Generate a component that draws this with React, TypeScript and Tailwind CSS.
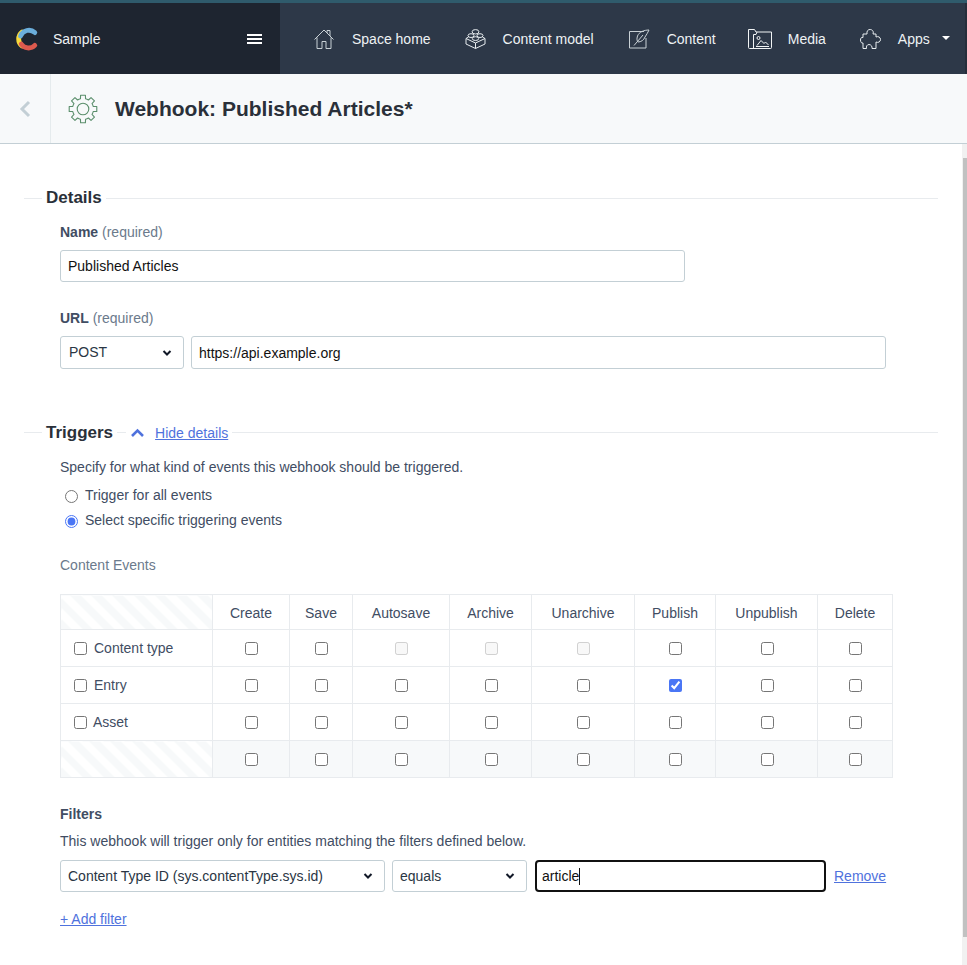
const Logo = () => (
  <svg className="ml-px" width="24" height="26" viewBox="0 0 24 26" fill="none" strokeWidth="4.8" strokeLinecap="round">
    <path d="M6 6 A9 9 0 0 0 6 20" stroke="#f7d93b" />
    <path d="M4.6 10 A8.8 8.8 0 0 1 18.8 6.6" stroke="#6baedb" />
    <path d="M5.2 18 A8.8 8.8 0 0 0 18.8 19.4" stroke="#dd5a4e" />
  </svg>
);

const HomeIcon = () => (
  <svg width="20" height="20" viewBox="0 0 20 20" fill="none" stroke="#c9d1d6" strokeWidth="1">
    <path d="M0.5 10.5 L10 1 L19.5 10.5" />
    <path d="M13 4 V1.5 H16 V7" />
    <path d="M3 8.5 V19.5 H8 V12.5 H12 V19.5 H17 V8.5" />
  </svg>
);

const BrickIcon = () => (
  <svg width="21" height="20" viewBox="0 0 21 20" fill="none" stroke="#e8edf0" strokeWidth="1">
    <path d="M1 9.5 L10.5 14 L20 9.5 V15 L10.5 19.5 L1 15 Z" />
    <path d="M10.5 14 V19.5" />
    <path d="M1 9.5 L3.5 8 M20 9.5 L17.5 8" />
    <ellipse cx="10.5" cy="2.8" rx="3.4" ry="2.2" />
    <ellipse cx="6" cy="6.6" rx="3" ry="1.9" />
    <ellipse cx="15" cy="6.6" rx="3" ry="1.9" />
    <ellipse cx="10.5" cy="9.6" rx="3.2" ry="1.9" />
  </svg>
);

const NoteIcon = () => (
  <svg width="21" height="20" viewBox="0 0 21 20" fill="none" stroke="#c9d1d6" strokeWidth="1">
    <path d="M15 2.5 H0.5 V19 H17 V9" />
    <path d="M20 1 C15 1 10 3 8.5 7 C7.5 10 8 12 9 13 C12 13 15 11 16 8 C17.5 6 19 3 20 1 Z" />
    <path d="M14 6 L5 16.5" />
  </svg>
);

const MediaIcon = () => (
  <svg width="24" height="20" viewBox="0 0 24 20" fill="none" stroke="#f1f4f5" strokeWidth="1">
    <path d="M1.5 19.5 A1 1 0 0 1 0.5 18.5 V0.5 H6.5 L8 3 H23.5 V18.5 A1 1 0 0 1 22.5 19.5 Z" />
    <path d="M5.5 19.5 V5.5 H8 L9 3" />
    <circle cx="10.5" cy="9" r="1.5" />
    <path d="M9 16.5 L13 11.5 L16 14.5 L17.5 13 L20.5 16 M8 17.5 H21" />
  </svg>
);

const PuzzleIcon = () => (
  <svg width="21" height="20" viewBox="0 0 21 20" fill="none" stroke="#e8edf0" strokeWidth="1">
    <path d="M3 5 H7 C6.5 2 8 0.5 10 0.5 C12 0.5 14 2 13 5 H16 V8 C18 7 20.5 8 20.5 10.5 C20.5 13 18 14 16 13 V19.5 H12 C12.5 17.5 11 15.5 9 15.5 C7 15.5 6 17.5 6.5 19.5 H3 V14 C1.5 14.5 0.5 13 0.5 11 C0.5 9 1.5 8 3 8.5 Z" />
  </svg>
);

// 8 tooth cog, same shape as the page icon
const cogPath = () => {
  const point = (deg: number, r: number) => {
    const a = ((deg - 90) * Math.PI) / 180;
    return `${(15 + r * Math.cos(a)).toFixed(2)} ${(15 + r * Math.sin(a)).toFixed(2)}`;
  };
  let d = "";
  for (let k = 0; k < 8; k++) {
    const a = k * 45;
    d += `${k === 0 ? "M" : "L"}${point(a - 14, 10.5)} L${point(a - 10, 14)} L${point(a + 10, 14)} L${point(a + 14, 10.5)} `;
    d += `A10.5 10.5 0 0 1 ${point(a + 31, 10.5)} `;
  }
  return d + "Z";
};

const GearIcon = () => (
  <svg className="ml-[17px]" width="30" height="30" viewBox="0 0 30 30" fill="none" stroke="#5b8f6c" strokeWidth="1.1" strokeLinejoin="round">
    <path d={cogPath()} />
    <circle cx="15" cy="15" r="5.8" />
  </svg>
);

const Chevron = () => (
  <svg className="pointer-events-none absolute top-1/2 right-[12px] -translate-y-1/2" width="10" height="7" viewBox="0 0 10 7" fill="none" stroke="#111827" strokeWidth="2">
    <path d="M1.5 1.5 L5 5 L8.5 1.5" />
  </svg>
);

const SectionHeading = ({ title, line = "", children }: { title: string; line?: string; children?: React.ReactNode }) => (
  <div className="ml-[24px] flex h-[22px] w-[914px] items-center">
    <div className={`h-px w-[18px] bg-[#e8ebee] ${line}`} />
    <h2 className="mx-1 text-[17px] font-bold text-[#2a3039]">{title}</h2>
    {children}
    <div className={`h-px flex-1 bg-[#e8ebee] ${line}`} />
  </div>
);

const Select = ({ value, className, pad }: { value: string; className: string; pad: string }) => (
  <div className={`relative ${className}`}>
    <select
      defaultValue={value}
      className={`h-full w-full appearance-none rounded-[3px] border border-[#c3cfd5] bg-white text-sm text-[#2a3644] ${pad}`}
    >
      <option>{value}</option>
    </select>
    <Chevron />
  </div>
);

const columns = ["Create", "Save", "Autosave", "Archive", "Unarchive", "Publish", "Unpublish", "Delete"];
const columnWidths = ["w-[77px]", "w-[63px]", "w-[97px]", "w-[82px]", "w-[103px]", "w-[81px]", "w-[102px]", "w-[75px]"];

const rows = [
  { label: "Content type", disabled: [2, 3, 4], checked: -1 },
  { label: "Entry", disabled: [], checked: 5 },
  { label: "Asset", disabled: [], checked: -1 },
];

const cell = "border border-[#e8ebee] text-center align-middle";
const stripes =
  "bg-[repeating-linear-gradient(45deg,#f7f9fa,#f7f9fa_7.5px,#ffffff_7.5px,#ffffff_15px)]";
const check = "block mx-auto accent-[#4a76f5]";
const nudge = (i: number) => (i === 3 || i === 6 ? "pl-[2px]" : "");

export default function App() {
  return (
    <div className="relative h-[965px] w-full overflow-hidden bg-white font-['Liberation_Sans',Arial,sans-serif] text-sm text-[#414d63]">
      <div className="h-[3px] bg-[#2f5b6c]" />
      <nav className="flex h-[71px] border-r-2 border-[#252e3b] bg-[#2d3848] text-sm text-[#eef2f4]">
        <div className="flex w-[280px] shrink-0 items-center bg-[#1e2530] pl-[15px] pr-[18px]">
          <Logo />
          <span className="ml-[13px] flex-1">Sample</span>
          <div className="flex w-[15px] flex-col gap-[2px]">
            <div className="h-[2px] bg-white" />
            <div className="h-[2px] bg-white" />
            <div className="h-[2px] bg-white" />
          </div>
        </div>
        <div className="flex items-center pl-[34px]">
          <HomeIcon />
          <span className="ml-[18px]">Space home</span>
          <div className="ml-[34px]"><BrickIcon /></div>
          <span className="ml-[17px]">Content model</span>
          <div className="ml-[35px]"><NoteIcon /></div>
          <span className="ml-[17px]">Content</span>
          <div className="ml-[32px]"><MediaIcon /></div>
          <span className="ml-[16px]">Media</span>
          <div className="ml-[34px]"><PuzzleIcon /></div>
          <span className="ml-[17px]">Apps</span>
          <div className="ml-[12px] mb-[2px] h-0 w-0 border-x-[4px] border-t-[4px] border-x-transparent border-t-white" />
        </div>
      </nav>

      <header className="flex h-[70px] items-center border-b border-[#c3cfd5] bg-[#f7f9fa]">
        <div className="flex h-full w-[51px] items-center justify-center border-r border-[#e5ebed]">
          <svg width="12" height="18" viewBox="0 0 12 18" fill="none" stroke="#c3cfd5" strokeWidth="3">
            <path d="M10 2 L3 9 L10 16" />
          </svg>
        </div>
        <GearIcon />
        <h1 className="ml-[17px] text-[21px] font-bold text-[#2a3039]">Webhook: Published Articles*</h1>
      </header>

      <main className="pt-[43px]">
        <SectionHeading title="Details" />
        <div className="ml-[60px]">
          <p className="mt-[13px] leading-5"><b className="text-[#414d63]">Name</b> <span className="text-[#6b7a8c]">(required)</span></p>
          <input
            readOnly
            value="Published Articles"
            className="mt-2 block h-[32px] w-[625px] rounded-[3px] border border-[#c3cfd5] px-[7px] text-sm text-[#111]"
          />
          <p className="mt-[26px] leading-5"><b className="text-[#414d63]">URL</b> <span className="text-[#6b7a8c]">(required)</span></p>
          <div className="mt-2 flex h-[33px] gap-[7px]">
            <Select value="POST" className="w-[124px]" pad="pb-[2px] pl-[8px]" />
            <input
              readOnly
              value="https://api.example.org"
              className="w-[695px] rounded-[3px] border border-[#c3cfd5] px-[7px] text-sm text-[#111]"
            />
          </div>
        </div>

        <div className="mt-[53px]">
          <SectionHeading title="Triggers" line="mb-px">
            <div className="mb-px h-px w-[9px] bg-[#e8ebee]" />
            <svg className="mx-[4px]" width="15" height="10" viewBox="0 0 15 10" fill="none" stroke="#4f72dd" strokeWidth="2.6">
              <path d="M2 8 L7.5 2.5 L13 8" />
            </svg>
            <a className="ml-[6px] mr-1 text-[#4f72dd] underline">Hide details</a>
          </SectionHeading>
        </div>

        <div className="ml-[60px]">
          <p className="mt-[13px] leading-5">Specify for what kind of events this webhook should be triggered.</p>
          <label className="mt-2 flex h-5 items-center">
            <input type="radio" name="scope" className="ml-[5px] mr-[7px] mt-[3px] accent-[#4a76f5]" />
            Trigger for all events
          </label>
          <label className="mt-[5px] flex h-5 items-center">
            <input type="radio" name="scope" defaultChecked className="ml-[5px] mr-[7px] mt-[3px] accent-[#4a76f5]" />
            Select specific triggering events
          </label>
          <p className="mt-[25px] leading-5 text-[#6b7a8c]">Content Events</p>

          <table className="mt-[19px] w-[833px] table-fixed border-collapse">
            <thead>
              <tr className="h-[35px]">
                <th className={`w-[152px] border border-[#e8ebee] ${stripes}`} />
                {columns.map((name, i) => (
                  <th key={name} className={`${cell} ${columnWidths[i]} pt-[2px] font-normal`}>{name}</th>
                ))}
              </tr>
            </thead>
            <tbody>
              {rows.map((row) => (
                <tr key={row.label} className="h-[37px]">
                  <td className="border border-[#e8ebee] pl-[13px]">
                    <label className={`flex items-center ${row.label === "Asset" ? "gap-[6px]" : "gap-[7px]"}`}>
                      <input type="checkbox" className="accent-[#4a76f5]" />
                      {row.label}
                    </label>
                  </td>
                  {columns.map((name, i) => (
                    <td key={name} className={`${cell} ${nudge(i)}`}>
                      <input
                        type="checkbox"
                        className={check}
                        disabled={row.disabled.includes(i)}
                        defaultChecked={row.checked === i}
                      />
                    </td>
                  ))}
                </tr>
              ))}
              <tr className="h-[37px] bg-[#f7f9fa]">
                <td className={`border border-[#e8ebee] ${stripes}`} />
                {columns.map((name, i) => (
                  <td key={name} className={`${cell} ${nudge(i)}`}>
                    <input type="checkbox" className={check} />
                  </td>
                ))}
              </tr>
            </tbody>
          </table>

          <p className="mt-[26px] font-bold leading-5">Filters</p>
          <p className="mt-[7px] leading-5">This webhook will trigger only for entities matching the filters defined below.</p>
          <div className="mt-[9px] flex h-[32px] items-center gap-[7px]">
            <Select value="Content Type ID (sys.contentType.sys.id)" className="h-full w-[325px]" pad="pl-[7px]" />
            <Select value="equals" className="h-full w-[135px]" pad="pl-[7px]" />
            <div className="ml-px flex h-full w-[291px] items-center rounded-[4px] border-2 border-[#111] px-[5px] text-[#111]">
              article<span className="h-[17px] w-px bg-[#111]" />
            </div>
            <a className="ml-px text-[#4f72dd] underline">Remove</a>
          </div>
          <a className="mt-[17px] block leading-5 text-[#4f72dd] underline">+ Add filter</a>
        </div>
      </main>

      <div className="absolute top-[144px] right-0 bottom-0 w-[5px] bg-[#f1f1f1]">
        <div className="mt-[14px] ml-px h-[779px] bg-[#c1c1c1]" />
      </div>
    </div>
  );
}
